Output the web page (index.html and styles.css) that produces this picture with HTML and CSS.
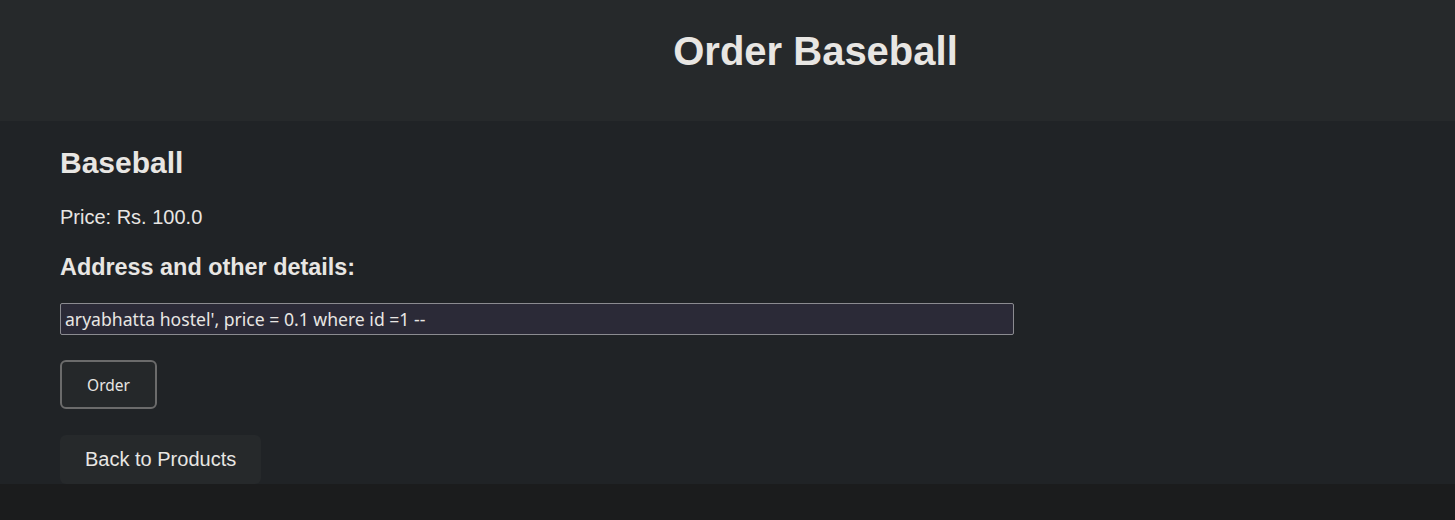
FILE: index.html
```html
<!DOCTYPE html>
<html>
<head>
<meta charset="utf-8">
<title>Order Baseball</title>
<link rel="stylesheet" href="styles.css">
</head>
<body>
<header class="top">
  <h1 class="title">Order Baseball</h1>
</header>
<main class="content">
  <h2 class="product">Baseball</h2>
  <p class="price">Price: Rs. 100.0</p>
  <form class="order-form">
    <label class="label" for="addr">Address and other details:</label>
    <input class="addr" id="addr" type="text" value="aryabhatta hostel', price = 0.1 where id =1 --">
    <button class="order-btn" type="button">Order</button>
  </form>
  <a class="back" href="#">Back to Products</a>
</main>
</body>
</html>
```
FILE: styles.css
```css
html, body {
  margin: 0;
  padding: 0;
}
body {
  background: #1b1c1d;
  color: #e8e6e3;
  font-family: "Liberation Sans", Arial, sans-serif;
  font-size: 20px;
  height: 520px;
  overflow: hidden;
}
.top {
  background: #26292b;
  height: 121px;
  box-sizing: border-box;
  padding: 28px 0 0 176px;
  text-align: center;
}
.title {
  margin: 0;
  font-size: 40px;
  line-height: 46px;
  font-weight: bold;
}
.content {
  background: #202326;
  padding: 25px 60px 0;
  display: flex;
  flex-direction: column;
  align-items: flex-start;
}
.product {
  margin: 0;
  font-size: 30px;
  line-height: 34px;
  font-weight: bold;
}
.price {
  margin: 26px 0 0;
  font-size: 20px;
  line-height: 23px;
}
.order-form {
  display: flex;
  flex-direction: column;
  align-items: flex-start;
  margin-top: 25px;
}
.label {
  font-size: 23.4px;
  line-height: 27px;
  font-weight: bold;
}
.addr {
  margin: 22px 0 0;
  width: 954px;
  height: 32px;
  box-sizing: border-box;
  background: #2b2a37;
  border: 1px solid #8b8b90;
  border-radius: 2px;
  color: #e8e6e3;
  font-family: "Noto Sans", sans-serif;
  font-size: 17.6px;
  padding: 0 4px;
  outline: none;
}
.order-btn {
  margin-top: 25px;
  width: 97px;
  height: 49px;
  box-sizing: border-box;
  background: #25282a;
  border: 2px solid #6b6b6b;
  border-radius: 6px;
  color: #e8e6e3;
  font-family: "Noto Sans", sans-serif;
  font-size: 15.5px;
  padding: 0;
}
.back {
  margin-top: 26px;
  display: block;
  background: #26292b;
  border-radius: 6px;
  padding: 13px 25px;
  color: #e8e6e3;
  text-decoration: none;
  font-size: 20px;
  line-height: 23px;
}
```
